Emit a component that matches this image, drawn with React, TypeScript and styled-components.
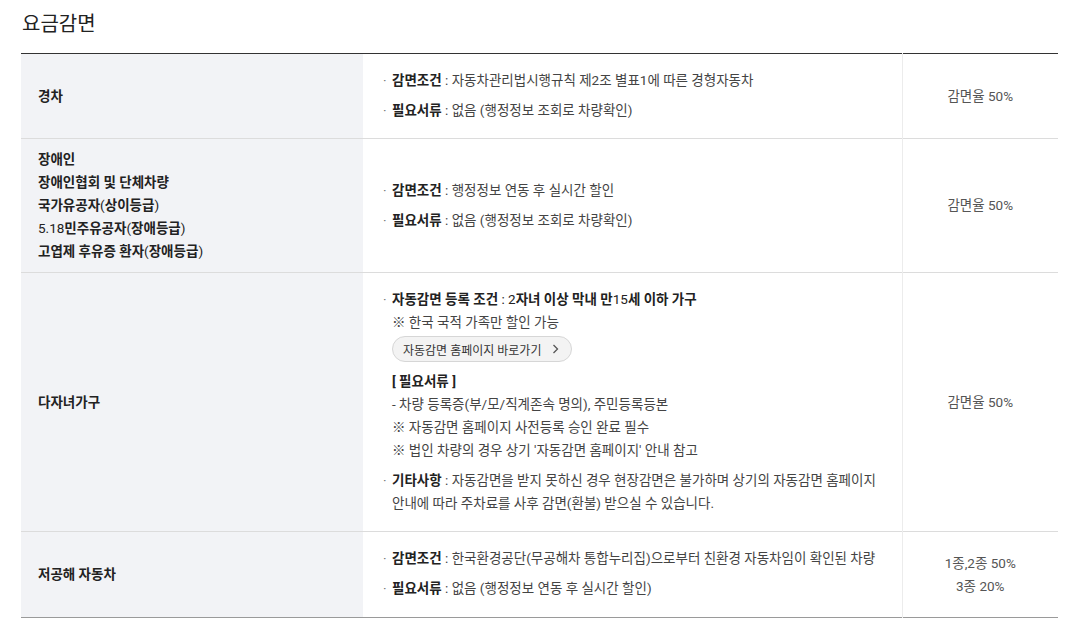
import React from "react";
import styled, { createGlobalStyle } from "styled-components";

// --- Types ---
interface Bullet {
  label: string;
  body: React.ReactNode;
}

interface DiscountRow {
  id: string;
  target: React.ReactNode;
  bullets: Bullet[];
  rate: string[];
}

// --- Global ---
const GlobalStyle = createGlobalStyle`
  html, body {
    margin: 0;
    padding: 0;
    background: #fff;
  }
  body {
    font-family: Roboto, "Noto Sans CJK KR", "Noto Sans", sans-serif;
    color: #444;
    -webkit-font-smoothing: antialiased;
  }
`;

// --- Styled Components ---
const Page = styled.div`
  width: 1037px;
  padding: 10px 0 0 21px;
`;

const Title = styled.h2`
  margin: 0 0 15px 1px;
  font-size: 20px;
  line-height: 28px;
  font-weight: 400;
  color: #222;
`;

const Table = styled.table`
  width: 100%;
  border-collapse: collapse;
  table-layout: fixed;
  border-top: 1px solid #333;
  border-bottom: 1px solid #9a9a9a;
  font-size: 13.5px;
  line-height: 23px;
`;

const Col = styled.col<{ $width: number }>`
  width: ${(p) => p.$width}px;
`;

const Row = styled.tr`
  & + & {
    border-top: 1px solid #dcdcdc;
  }
`;

const TargetCell = styled.th`
  padding: 9px 17px;
  background: #f2f3f6;
  text-align: left;
  vertical-align: middle;
  font-weight: 700;
  color: #222;
`;

const DetailCell = styled.td`
  padding: 12px 20px 13px;
  vertical-align: middle;
  border-right: 1px solid #ececec;

  tr:last-child > & {
    padding-bottom: 14px;
  }
`;

const RateCell = styled.td`
  padding: 12px 10px;
  text-align: center;
  vertical-align: middle;
  color: #555;
`;

const Thin = styled.span`
  font-weight: 400;
`;

const List = styled.ul`
  margin: 0;
  padding: 0;
  list-style: none;
`;

const Item = styled.li`
  display: flex;
  padding: 3px 0;

  &::before {
    content: "·";
    flex: 0 0 9px;
    color: #777;
  }

  & + & {
    padding-top: 4px;
  }
`;

const ItemBody = styled.div`
  flex: 1;
  min-width: 0;
`;

const Label = styled.strong`
  font-weight: 700;
  color: #222;
`;

const LinkButton = styled.button`
  display: inline-flex;
  align-items: center;
  gap: 11px;
  height: 26px;
  margin-top: 2px;
  padding: 0 12px 0 10px;
  border: 1px solid #d6d6d6;
  border-radius: 13px;
  background: #f3f3f3;
  font-family: inherit;
  font-size: 12px;
  color: #333;
  cursor: pointer;
`;

const SubBlock = styled.div<{ $gap?: number }>`
  margin-top: ${(p) => p.$gap ?? 0}px;
`;

const SubTitle = styled.div`
  font-weight: 700;
  color: #222;
`;

// --- Data ---
const rows: DiscountRow[] = [
  {
    id: "light",
    target: "경차",
    bullets: [
      { label: "감면조건", body: "자동차관리법시행규칙 제2조 별표1에 따른 경형자동차" },
      { label: "필요서류", body: "없음 (행정정보 조회로 차량확인)" },
    ],
    rate: ["감면율 50%"],
  },
  {
    id: "disabled",
    target: (
      <>
        장애인
        <br />
        장애인협회 및 단체차량
        <br />
        국가유공자<Thin>(</Thin>상이등급<Thin>)</Thin>
        <br />
        <Thin>5.18</Thin>민주유공자<Thin>(</Thin>장애등급<Thin>)</Thin>
        <br />
        고엽제 후유증 환자<Thin>(</Thin>장애등급<Thin>)</Thin>
      </>
    ),
    bullets: [
      { label: "감면조건", body: "행정정보 연동 후 실시간 할인" },
      { label: "필요서류", body: "없음 (행정정보 조회로 차량확인)" },
    ],
    rate: ["감면율 50%"],
  },
];

const Chevron = () => (
  <svg width="7" height="10" viewBox="0 0 7 10" fill="none">
    <path d="M1.5 1l4 4-4 4" stroke="#555" strokeWidth="1.3" />
  </svg>
);

const BulletList: React.FC<{ bullets: Bullet[] }> = ({ bullets }) => (
  <List>
    {bullets.map((b) => (
      <Item key={b.label}>
        <ItemBody>
          <Label>{b.label}</Label> : {b.body}
        </ItemBody>
      </Item>
    ))}
  </List>
);

// --- Main ---
export default function App() {
  return (
    <>
      <GlobalStyle />
      <Page>
        <Title>요금감면</Title>
        <Table>
          <colgroup>
            <Col $width={342} />
            <Col $width={539} />
            <Col $width={156} />
          </colgroup>
          <tbody>
            {rows.map((r) => (
              <Row key={r.id}>
                <TargetCell>{r.target}</TargetCell>
                <DetailCell>
                  <BulletList bullets={r.bullets} />
                </DetailCell>
                <RateCell>
                  {r.rate.map((t) => (
                    <div key={t}>{t}</div>
                  ))}
                </RateCell>
              </Row>
            ))}

            <Row>
              <TargetCell>다자녀가구</TargetCell>
              <DetailCell>
                <List>
                  <Item>
                    <ItemBody>
                      <Label>
                        자동감면 등록 조건 <Thin>:</Thin> <Thin>2</Thin>자녀 이상 막내 만
                        <Thin>15</Thin>세 이하 가구
                      </Label>
                      <div>※ 한국 국적 가족만 할인 가능</div>
                      <LinkButton type="button">
                        자동감면 홈페이지 바로가기
                        <Chevron />
                      </LinkButton>
                      <SubBlock $gap={8}>
                        <SubTitle>[ 필요서류 ]</SubTitle>
                        <div>- 차량 등록증(부/모/직계존속 명의), 주민등록등본</div>
                        <div>※ 자동감면 홈페이지 사전등록 승인 완료 필수</div>
                        <div>※ 법인 차량의 경우 상기 '자동감면 홈페이지' 안내 참고</div>
                      </SubBlock>
                    </ItemBody>
                  </Item>
                  <Item>
                    <ItemBody>
                      <Label>기타사항</Label> : 자동감면을 받지 못하신 경우 현장감면은 불가하며
                      상기의 자동감면 홈페이지
                      <br />
                      안내에 따라 주차료를 사후 감면(환불) 받으실 수 있습니다.
                    </ItemBody>
                  </Item>
                </List>
              </DetailCell>
              <RateCell>감면율 50%</RateCell>
            </Row>

            <Row>
              <TargetCell>저공해 자동차</TargetCell>
              <DetailCell>
                <BulletList
                  bullets={[
                    {
                      label: "감면조건",
                      body: "한국환경공단(무공해차 통합누리집)으로부터 친환경 자동차임이 확인된 차량",
                    },
                    { label: "필요서류", body: "없음 (행정정보 연동 후 실시간 할인)" },
                  ]}
                />
              </DetailCell>
              <RateCell>
                <div>1종,2종 50%</div>
                <div>3종 20%</div>
              </RateCell>
            </Row>
          </tbody>
        </Table>
      </Page>
    </>
  );
}
